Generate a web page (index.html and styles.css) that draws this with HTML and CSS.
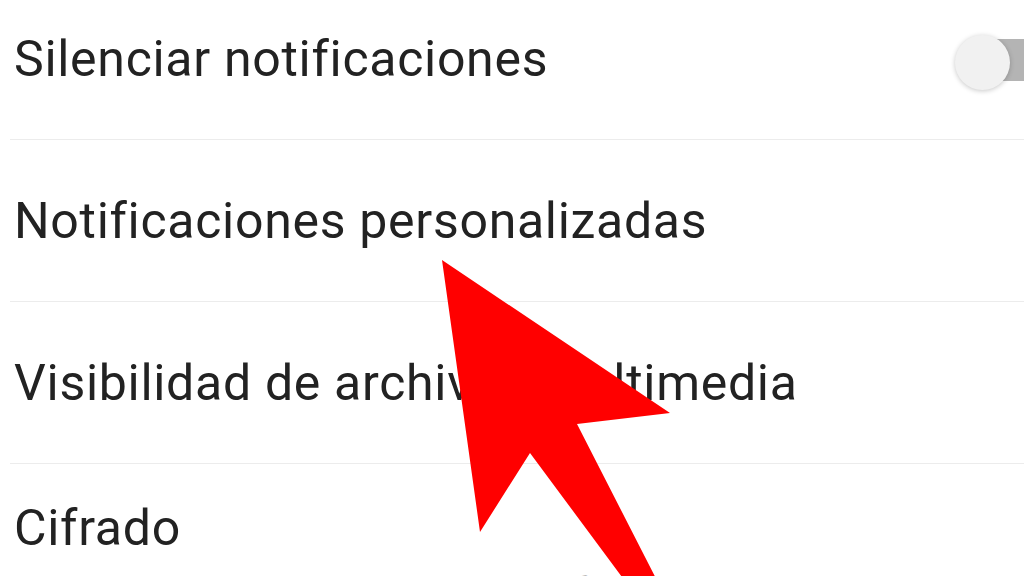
FILE: index.html
```html
<!DOCTYPE html>
<html lang="es">
<head>
<meta charset="utf-8">
<title>Ajustes</title>
<link rel="stylesheet" href="styles.css">
</head>
<body>
<div class="screen">
  <ul class="list">
    <li class="row">
      <span class="title">Silenciar notificaciones</span>
      <span class="switch"><span class="track"></span><span class="thumb"></span></span>
    </li>
    <li class="row">
      <span class="title">Notificaciones personalizadas</span>
    </li>
    <li class="row">
      <span class="title">Visibilidad de archivos multimedia</span>
    </li>
    <li class="row two">
      <span class="title">Cifrado</span>
      <span class="sub">Los mensajes y las llamadas están cifrados de extremo a extremo. Toca para verificar.</span>
    </li>
  </ul>
  <svg class="arrow" width="1024" height="576" viewBox="0 0 1024 576">
    <polygon points="442,260 670,413 577,424 667,600 639,600 530,453 480,532" fill="#ff0000"/>
  </svg>
</div>
</body>
</html>
```
FILE: styles.css
```css
html, body {
  margin: 0;
  padding: 0;
  background: #ffffff;
}
.screen {
  position: relative;
  width: 1024px;
  height: 576px;
  overflow: hidden;
  background: #ffffff;
  font-family: Roboto, "Noto Sans", "Liberation Sans", sans-serif;
}
.list {
  list-style: none;
  margin: -22px 0 0 0;
  padding: 0;
}
.row {
  display: flex;
  align-items: center;
  justify-content: space-between;
  height: 161px;
  margin-left: 10px;
  padding-left: 4px;
  border-bottom: 1.5px solid #ececec;
}
.row.two {
  flex-direction: column;
  align-items: flex-start;
  justify-content: flex-start;
  padding-top: 35px;
  height: auto;
  border-bottom: none;
}
.title {
  font-size: 50px;
  color: #222222;
  white-space: nowrap;
  letter-spacing: 0.7px;
}
.sub {
  font-size: 34px;
  color: #8a8a8a;
  white-space: nowrap;
  margin-top: 12px;
}
.switch {
  position: relative;
  width: 110px;
  height: 60px;
  margin-right: -41px;
  flex: none;
}
.track {
  position: absolute;
  left: 10px;
  top: 10px;
  width: 100px;
  height: 42px;
  border-radius: 21px;
  background: #b4b4b4;
}
.thumb {
  position: absolute;
  left: 0;
  top: 6px;
  width: 55px;
  height: 55px;
  border-radius: 50%;
  background: #f1f1f1;
  box-shadow: 0 1px 5px rgba(0,0,0,0.22);
}
.arrow {
  position: absolute;
  left: 0;
  top: 0;
}
```
